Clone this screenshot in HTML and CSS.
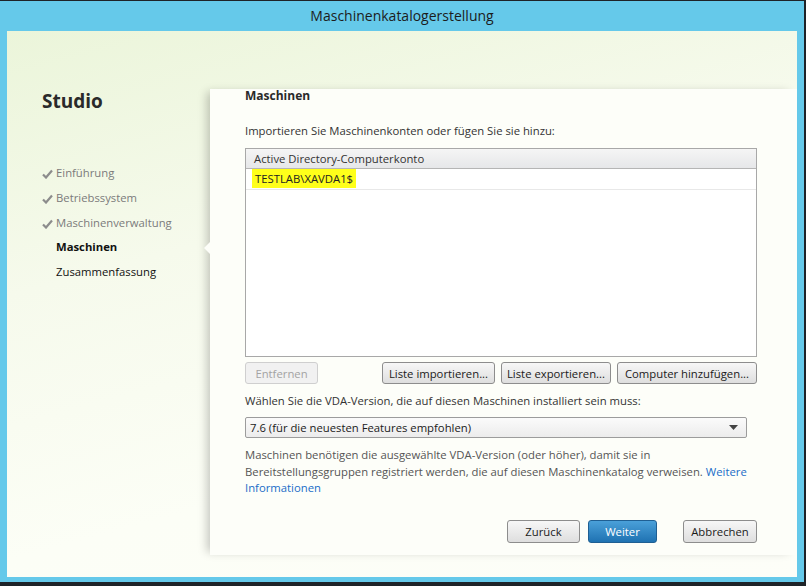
FILE: index.html
```html
<!DOCTYPE html>
<html>
<head>
    <title>Maschinenkatalogerstellung</title>
    <link rel="stylesheet" href="styles.css">
</head>
<body>
    <div class="window">
        <div class="titlebar">Maschinenkatalogerstellung</div>
        <div class="client">
            <div class="sidebar">
                <h1 class="brand">Studio</h1>
                <ul class="steps">
                    <li class="done"><svg class="check" width="11" height="10" viewBox="0 0 11 10"><path d="M1 5.5 L4 8.5 L10 1.5" fill="none" stroke="#8c8c8c" stroke-width="2.2"/></svg>Einführung</li>
                    <li class="done"><svg class="check" width="11" height="10" viewBox="0 0 11 10"><path d="M1 5.5 L4 8.5 L10 1.5" fill="none" stroke="#8c8c8c" stroke-width="2.2"/></svg>Betriebssystem</li>
                    <li class="done"><svg class="check" width="11" height="10" viewBox="0 0 11 10"><path d="M1 5.5 L4 8.5 L10 1.5" fill="none" stroke="#8c8c8c" stroke-width="2.2"/></svg>Maschinenverwaltung</li>
                    <li class="current">Maschinen</li>
                    <li>Zusammenfassung</li>
                </ul>
            </div>

            <div class="main">
                <span class="notch"></span>
                <h2>Maschinen</h2>
                <p class="intro">Importieren Sie Maschinenkonten oder fügen Sie sie hinzu:</p>

                <div class="grid">
                    <div class="grid-head">Active Directory-Computerkonto</div>
                    <div class="grid-row"><span class="mark">TESTLAB\XAVDA1$</span></div>
                </div>

                <div class="actions">
                    <button class="btn remove" disabled>Entfernen</button>
                    <div class="group">
                        <button class="btn import">Liste importieren...</button>
                        <button class="btn export">Liste exportieren...</button>
                        <button class="btn add">Computer hinzufügen...</button>
                    </div>
                </div>

                <p class="label">Wählen Sie die VDA-Version, die auf diesen Maschinen installiert sein muss:</p>
                <div class="select">
                    <span>7.6 (für die neuesten Features empfohlen)</span>
                    <svg width="9" height="5" viewBox="0 0 9 5"><path d="M0 0 H9 L4.5 5 Z" fill="#444"/></svg>
                </div>

                <p class="note">Maschinen benötigen die ausgewählte VDA-Version (oder höher), damit sie in<br>Bereitstellungsgruppen registriert werden, die auf diesen Maschinenkatalog verweisen. <a href="#">Weitere</a><br><a href="#">Informationen</a></p>

                <div class="footer">
                    <button class="btn back">Zurück</button>
                    <button class="btn primary">Weiter</button>
                    <button class="btn cancel">Abbrechen</button>
                </div>
            </div>
        </div>
    </div>
</body>
</html>
```

FILE: styles.css
```css
body {
    margin: 0;
    background-color: #1e2328;
    font-family: 'Open Sans', 'Noto Sans', sans-serif;
    font-size: 11.3px;
    color: #222;
}

.window {
    width: 804px;
    height: 581px;
    margin-top: 1px;
    background-color: #65c9ea;
}

.titlebar {
    height: 30px;
    line-height: 30px;
    text-align: center;
    font-size: 14px;
    color: #1c1c1c;
}

.client {
    display: flex;
    margin: 0 7px;
    height: 546px;
    background: linear-gradient(165deg, #ebf5da 0%, #f6faec 35%, #fcfef6 70%, #fdfef8 100%);
}

.sidebar {
    width: 168px;
    padding-left: 35px;
    flex-shrink: 0;
}

.brand {
    margin: 58px 0 0;
    font-size: 19px;
    font-weight: bold;
    color: #2a2a2a;
    line-height: 24px;
}

.steps {
    list-style: none;
    margin: 48px 0 0;
    padding: 0;
}

.steps li {
    height: 24.75px;
    line-height: 24.75px;
    padding-left: 14px;
    position: relative;
    color: #111;
}

.steps li.done {
    color: #7b7b7b;
}

.steps li.current {
    font-weight: bold;
}

.check {
    position: absolute;
    left: 0;
    top: 8px;
}

.main {
    position: relative;
    flex: 1;
    margin-top: 58px;
    margin-bottom: 22px;
    padding: 0 40px 0 35px;
    background-color: #fdfef9;
    box-shadow: -6px 0 9px -3px rgba(0, 0, 0, 0.22);
    display: flex;
    flex-direction: column;
}

.notch {
    position: absolute;
    left: -6px;
    top: 153px;
    width: 0;
    height: 0;
    border-top: 6px solid transparent;
    border-bottom: 6px solid transparent;
    border-right: 6px solid #fdfef9;
}

h2 {
    margin: 0;
    font-size: 12px;
    font-weight: bold;
    line-height: 14px;
    color: #2a2a2a;
}

p {
    margin: 0;
}

.intro {
    margin-top: 20px;
    line-height: 16px;
    color: #333;
}

.grid {
    margin-top: 9px;
    height: 207px;
    border: 1px solid #a8a8a8;
    background-color: #fff;
}

.grid-head {
    height: 19px;
    line-height: 19px;
    padding-left: 8px;
    color: #333;
    background: linear-gradient(#f5f5f5, #e6e7e9);
    border-bottom: 1px solid #b5b5b5;
}

.grid-row {
    height: 20px;
    line-height: 20px;
    padding-left: 6px;
    border-bottom: 1px solid #e8e8e8;
}

.mark {
    background-color: #ffff1a;
    padding: 2px 3px;
    color: #222;
}

.actions {
    display: flex;
    justify-content: space-between;
    margin-top: 5px;
}

.group {
    display: flex;
    gap: 6px;
}

.btn {
    height: 22px;
    padding: 0;
    font-family: inherit;
    font-size: 11.3px;
    color: #1a1a1a;
    background: linear-gradient(#f7f7f7, #dedede);
    border: 1px solid #8d8d8d;
    border-radius: 3px;
}

.btn:disabled {
    color: #a3a3a3;
    background: #f1f1f1;
    border-color: #cfcfcf;
}

.remove {
    width: 73px;
}

.import {
    width: 113px;
}

.export {
    width: 110px;
}

.add {
    width: 140px;
}

.label {
    margin-top: 9px;
    line-height: 16px;
    color: #333;
}

.select {
    display: flex;
    justify-content: space-between;
    align-items: center;
    width: 488px;
    height: 19px;
    margin-top: 8px;
    padding: 0 8px 0 4px;
    border: 1px solid #9c9c9c;
    border-radius: 2px;
    background: linear-gradient(#fbfbfb, #ececec);
    color: #1a1a1a;
}

.note {
    margin-top: 9px;
    line-height: 16.5px;
    color: #555;
}

.note a {
    color: #1a6dc8;
    text-decoration: none;
}

.footer {
    display: flex;
    justify-content: flex-end;
    margin-top: 23px;
}

.footer .btn {
    height: 23px;
}

.back {
    width: 73px;
}

.primary {
    width: 69px;
    margin-left: 8px;
    color: #fff;
    background: linear-gradient(#4aa0d9, #1f72b2);
    border-color: #1f5f93;
}

.cancel {
    width: 74px;
    margin-left: 26px;
}
```
